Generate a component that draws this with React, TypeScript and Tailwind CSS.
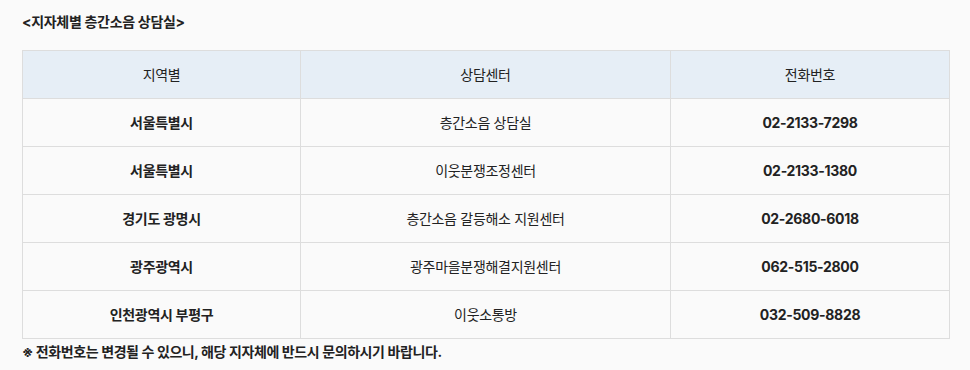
import React from 'react';

const rows = [
  { region: '서울특별시', center: '층간소음 상담실', phone: '02-2133-7298' },
  { region: '서울특별시', center: '이웃분쟁조정센터', phone: '02-2133-1380' },
  { region: '경기도 광명시', center: '층간소음 갈등해소 지원센터', phone: '02-2680-6018' },
  { region: '광주광역시', center: '광주마을분쟁해결지원센터', phone: '062-515-2800' },
  { region: '인천광역시 부평구', center: '이웃소통방', phone: '032-509-8828' },
];

export default function App() {
  return (
    <div
      className="w-[970px] h-[370px] bg-[#fafafa] px-[22px] pt-[12px] text-[#222]"
      style={{ fontFamily: 'Inter, "Noto Sans CJK KR", sans-serif' }}
    >
      <h3 className="text-[14px] font-bold leading-[20px] tracking-[-0.3px]">&lt;지자체별 층간소음 상담실&gt;</h3>
      <table className="mt-[18px] w-[927px] border-collapse table-fixed text-[14px]">
        <colgroup>
          <col className="w-[278px]" />
          <col className="w-[370px]" />
          <col className="w-[279px]" />
        </colgroup>
        <thead>
          <tr className="bg-[#e6eef6] h-[48px]">
            <th className="border border-[#dddddd] font-normal text-center tracking-[-0.3px]">지역별</th>
            <th className="border border-[#dddddd] font-normal text-center tracking-[-0.3px]">상담센터</th>
            <th className="border border-[#dddddd] font-normal text-center tracking-[-0.3px]">전화번호</th>
          </tr>
        </thead>
        <tbody>
          {rows.map((r, i) => (
            <tr key={i} className="h-[48px]">
              <td className="border border-[#dddddd] text-center font-bold tracking-[-0.3px]">{r.region}</td>
              <td className="border border-[#dddddd] text-center tracking-[-0.3px]">{r.center}</td>
              <td className="border border-[#dddddd] text-center font-bold tracking-[-0.3px]">{r.phone}</td>
            </tr>
          ))}
        </tbody>
      </table>
      <p className="mt-[3px] text-[14px] font-bold leading-[20px] tracking-[-0.4px]">※ 전화번호는 변경될 수 있으니, 해당 지자체에 반드시 문의하시기 바랍니다.</p>
    </div>
  );
}
